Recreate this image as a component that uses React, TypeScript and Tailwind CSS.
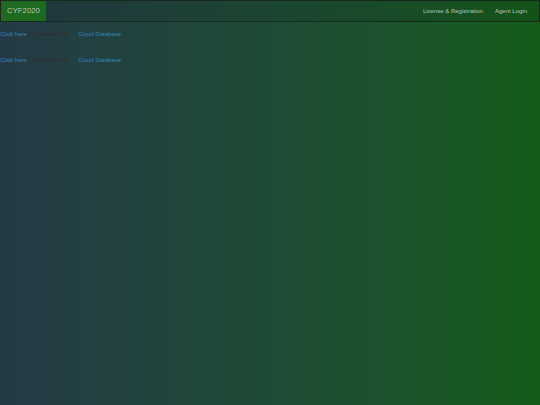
import React from "react";

export default function App() {
  const row = (
    <div className="flex items-center h-[10px] text-[6px] leading-none">
      <a className="text-[#3782b8] w-[32px]">Click here</a>
      <span className="text-[#3a2a2c] w-[46px]">to access the</span>
      <a className="text-[#3782b8]">Cloud Database</a>
    </div>
  );
  return (
    <div
      className="w-[540px] h-[405px] overflow-hidden bg-gradient-to-r from-[#243a46] to-[#155b18]"
      style={{ fontFamily: '"Liberation Sans", Arial, sans-serif' }}
    >
      <div className="flex items-center h-[22px] border border-[#17281c] bg-[rgba(0,0,0,0.08)]">
        <div className="h-full w-[45px] bg-[#1e6a1f] flex items-center pl-[6px] text-[7.8px] text-[#b9c4bc]">
          CYF2020
        </div>
        <div className="flex-1" />
        <div className="flex items-center gap-[12px] pr-[12px] text-[6px] text-[#b8c6b8]">
          <span>License &amp; Registration</span>
          <span>Agent Login</span>
        </div>
      </div>
      <div className="mt-[7px] flex flex-col gap-[16px]">
        {row}
        {row}
      </div>
    </div>
  );
}
